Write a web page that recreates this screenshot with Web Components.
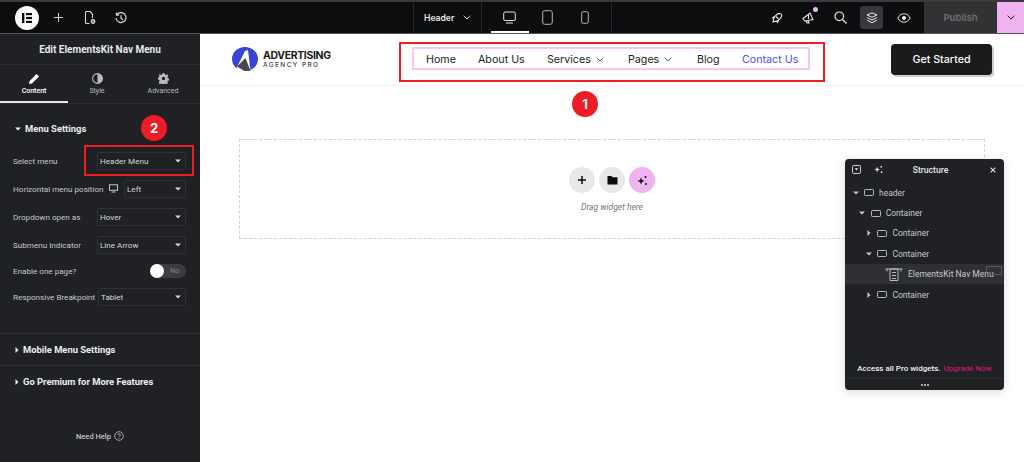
<!DOCTYPE html>
<html>
<head>
<meta charset="utf-8">
<title>Header editor</title>
<style>
  html, body { margin: 0; height: 100%; overflow: hidden; background: #fff; }
  body { font-family: Roboto, "Liberation Sans", sans-serif; }
</style>
</head>
<body>
<editor-app></editor-app>
<script>
const CARET_DOWN = '<svg width="6" height="4" viewBox="0 0 6 4"><path d="M0 .4h6L3 3.600z" fill="currentColor"/></svg>';
const CARET_RIGHT = '<svg width="4" height="6" viewBox="0 0 4 6"><path d="M.5 0v6l3-3z" fill="currentColor"/></svg>';
const CHEVRON = '<svg width="8" height="5" viewBox="0 0 8 5"><path d="M.6.700L4 4 7.400.700" fill="none" stroke="currentColor" stroke-width=".9"/></svg>';
const CONTAINER = '<svg width="10" height="7" viewBox="0 0 10 7"><rect x=".5" y=".5" width="9" height="6" rx=".8" fill="none" stroke="currentColor" stroke-width=".9"/></svg>';

class TopBar extends HTMLElement {
  constructor() {
    super();
    this.attachShadow({ mode: 'open' }).innerHTML = `
<style>
  :host { display: flex; height: 34px; box-sizing: border-box; background: #0c0d0e; border-top: 2px solid #3a3b3d; border-bottom: 1px solid #55575a; color: #e6e8ea; font-family: Inter, sans-serif; }
  .ic { display: flex; align-items: center; justify-content: center; }
  .left { display: flex; align-items: center; width: 413px; flex: none; }
  .logo { width: 24px; height: 24px; border-radius: 50%; background: #fff; margin-left: 15px; display: flex; align-items: center; justify-content: center; }
  .left .ic { width: 31px; }
  .left .ic.first { margin-left: 4px; }
  .doc { display: flex; align-items: center; width: 69px; flex: none; box-sizing: border-box; border-left: 1px solid #26282b; border-right: 1px solid #26282b; padding-left: 10px; gap: 9px; font-size: 8.600px; font-weight: 600; }
  .devices { display: flex; width: 120px; padding-left: 9px; flex: none; border-right: 1px solid #26282b; }
  .devices .ic { width: 37.5px; position: relative; }
  .devices .on::after { content: ""; position: absolute; left: 0; right: 0; bottom: 0; height: 2px; background: #fff; }
  .right { display: flex; align-items: center; flex: 1; justify-content: flex-end; }
  .tools { display: flex; align-items: center; gap: 8.750px; margin-right: 9px; }
  .tools .ic { width: 23px; height: 23px; border-radius: 3px; position: relative; }
  .tools .on { background: #36383b; }
  .dot { position: absolute; width: 5px; height: 5px; border-radius: 50%; background: #efb3f2; top: 1px; right: 2px; }
  .publish { width: 73px; align-self: stretch; background: #313234; color: #6f7072; font-size: 9.600px; font-weight: 600; display: flex; align-items: center; justify-content: center; }
  .more { width: 27px; align-self: stretch; background: #efb3f2; color: #0c0d0e; display: flex; align-items: center; justify-content: center; }
</style>
<div class="left">
  <div class="logo"><svg width="12" height="12" viewBox="0 0 12 12" fill="#0c0d0e"><rect x="1" y="1" width="2.400" height="10"/><rect x="5" y="1" width="6" height="2.200"/><rect x="5" y="4.900" width="6" height="2.200"/><rect x="5" y="8.800" width="6" height="2.200"/></svg></div>
  <div class="ic first"><svg width="9" height="9" viewBox="0 0 9 9"><path d="M4.500 0v9M0 4.500h9" stroke="#c9cbce"/></svg></div>
  <div class="ic"><svg width="12" height="14" viewBox="0 0 12 14" fill="none" stroke="#d5d7da" stroke-width="1.100"><path d="M5.500 12.500h-3a1 1 0 0 1-1-1v-10a1 1 0 0 1 1-1H6l2.500 2.500v4"/><circle cx="9" cy="10.500" r="1.900" fill="#777"/></svg></div>
  <div class="ic"><svg width="12" height="12" viewBox="0 0 12 12" fill="none" stroke="#d5d7da" stroke-width="1.200"><path d="M1.800 2.800A5 5 0 1 1 1 6M1.500 .6v2.600h2.600M6 3.300v3l2 1.200"/></svg></div>
</div>
<div class="doc"><span>Header</span>${CHEVRON}</div>
<div class="devices">
  <div class="ic on"><svg width="13" height="13" viewBox="0 0 13 13" fill="none" stroke="currentColor"><rect x=".7" y="1" width="11.600" height="8.500" rx="1.500"/><path d="M3 12h7"/></svg></div>
  <div class="ic"><svg width="11" height="15" viewBox="0 0 11 15" fill="none" stroke="#b4b6b9"><rect x=".7" y=".7" width="9.600" height="13.600" rx="2"/></svg></div>
  <div class="ic"><svg width="8" height="13" viewBox="0 0 8 13" fill="none" stroke="#b4b6b9"><rect x=".7" y=".7" width="6.600" height="11.600" rx="1.500"/></svg></div>
</div>
<div class="right">
  <div class="tools">
    <div class="ic"><svg width="12" height="12" viewBox="0 0 12 12" fill="none" stroke="currentColor" stroke-width="1.100"><ellipse cx="6.500" cy="5.500" rx="5" ry="2.700" transform="rotate(-45 6.500 5.500)"/><path d="M5 4.500l2.500 2.500M3.800 4.400L1.500 5.500l1.500 1M7.600 8.200L6.500 10.500l-1-1.500M3 9l-1.500 1.500"/></svg></div>
    <div class="ic"><svg width="13" height="13" viewBox="0 0 13 13" fill="none" stroke="currentColor" stroke-width="1.100"><path d="M1 7.500L8 2l3 6.500-8 1.500zM4 10l1 2h2l-1-2.500M6.500 4v4"/></svg><span class="dot"></span></div>
    <div class="ic"><svg width="13" height="13" viewBox="0 0 13 13" fill="none" stroke="currentColor" stroke-width="1.200"><circle cx="5.300" cy="5.300" r="4.300"/><path d="M8.500 8.500l4 4"/></svg></div>
    <div class="ic on"><svg width="12" height="12" viewBox="0 0 12 12" fill="none" stroke="currentColor"><path d="M6 .8L11 3 6 5.300 1 3zM1.200 5.800L6 8l4.800-2.200M1.200 8.300L6 10.800l4.800-2.500"/></svg></div>
    <div class="ic"><svg width="14" height="10" viewBox="0 0 14 10" fill="none" stroke="currentColor"><path d="M.8 5C2.500 2 4.500.8 7 .8S11.500 2 13.200 5C11.500 8 9.500 9.200 7 9.200S2.500 8 .8 5z"/><circle cx="7" cy="5" r="1.600" fill="currentColor"/></svg></div>
  </div>
  <div class="publish">Publish</div>
  <div class="more">${CHEVRON}</div>
</div>`;
  }
}

class SelectRow extends HTMLElement {
  constructor() {
    super();
    const width = this.getAttribute('width') || 89;
    this.attachShadow({ mode: 'open' }).innerHTML = `
<style>
  :host { display: flex; align-items: center; height: 28px; font-size: 8.100px; color: #c6c8cb; }
  .label { flex: 1; display: flex; align-items: center; white-space: nowrap; }
  slot[name=icon] { display: block; }
  .box { width: ${width}px; height: 18px; box-sizing: border-box; flex: none; border: 1px solid #2f3135; border-radius: 2px; display: flex; align-items: center; justify-content: space-between; padding: 0 4px 0 2px; color: #d5d7da; }
</style>
<div class="label"><slot></slot></div><slot name="icon"></slot>
<div class="box"><span>${this.getAttribute('value')}</span>${CARET_DOWN}</div>`;
  }
}

class EditorSidebar extends HTMLElement {
  constructor() {
    super();
    this.attachShadow({ mode: 'open' }).innerHTML = `
<style>
  :host { display: flex; flex-direction: column; width: 200px; flex: none; background: #1f2124; color: #e6e8ea; font-family: Roboto, sans-serif; position: relative; }
  .title { height: 31px; display: flex; align-items: center; justify-content: center; font-size: 10px; font-weight: 700; border-bottom: 1px solid #2b2d30; box-sizing: border-box; }
  .tabs { display: flex; height: 38px; border-bottom: 1px solid #2b2d30; }
  .tab { display: flex; flex-direction: column; align-items: center; justify-content: center; gap: 3px; font-size: 7px; color: #b9bbbe; }
  .tab.on { color: #fff; font-weight: 500; box-shadow: inset 0 -2px #e6e8ea; width: 68px; }
  .tab.s { width: 58px; }
  .tab.a { width: 74px; }
  .section { padding: 19px 14px 0 13px; height: 230px; box-sizing: border-box; border-bottom: 1px solid #303235; }
  .head { display: flex; align-items: center; gap: 4px; font-size: 9.400px; font-weight: 700; color: #eceef0; }
  .head.top { margin-bottom: 13px; }
  .fold { height: 32px; box-sizing: border-box; padding-left: 15px; gap: 4px; border-bottom: 1px solid #303235; }
  .fold.last { border: none; height: 31px; }
  .rows { display: flex; flex-direction: column; }
  .toggle-row { display: flex; align-items: center; justify-content: space-between; height: 24px; font-size: 8.100px; color: #c6c8cb; }
  .toggle { width: 36px; height: 14px; border-radius: 7px; background: #3a3c3f; position: relative; color: #85878a; font-size: 7px; display: flex; align-items: center; justify-content: flex-end; padding-right: 7px; box-sizing: border-box; }
  .toggle::before { content: ""; position: absolute; left: 0; top: 0; width: 14px; height: 14px; border-radius: 50%; background: #fff; }
  .help { margin-top: auto; margin-bottom: 21px; display: flex; justify-content: center; align-items: center; gap: 3px; font-size: 7.500px; font-weight: 500; color: #c6c8cb; }
  .tab-handle { position: absolute; left: 100%; top: 199px; width: 10px; height: 33px; background: #1f2124; display: flex; align-items: center; justify-content: center; color: #e6e8ea; }
  .mark { position: absolute; left: 84px; top: 111px; width: 110px; height: 31px; box-sizing: border-box; border: 2px solid #ee1c25; }
  .badge { position: absolute; left: 141px; top: 81px; width: 26px; height: 26px; border-radius: 50%; background: #ee1c25; color: #fff; font: 700 13px Inter, sans-serif; display: flex; align-items: center; justify-content: center; }
</style>
<div class="title">Edit ElementsKit Nav Menu</div>
<div class="tabs">
  <div class="tab on"><svg width="11" height="11" viewBox="0 0 11 11" fill="currentColor"><path d="M0 11l.6-3L7.500 1l2.500 2.500L3 10.500z"/></svg>Content</div>
  <div class="tab s"><svg width="11" height="11" viewBox="0 0 11 11"><circle cx="5.500" cy="5.500" r="4.900" fill="none" stroke="currentColor" stroke-width="1.100"/><path d="M5.500 .6a4.900 4.900 0 0 0 0 9.800z" fill="currentColor" transform="matrix(-1 0 0 1 11 0)"/></svg>Style</div>
  <div class="tab a"><svg width="11" height="11" viewBox="0 0 11 11" fill="currentColor"><path fill-rule="evenodd" d="M4.500 0h2l.3 1.500 1 .5L9.200 1.300l1.200 1.500-1 1.200.3 1 1.300.500v2l-1.400.4-.4 1 .8 1.200-1.500 1.300-1.200-.8-1 .4-.3 1.400h-2l-.3-1.400-1-.4-1.200.8L.9 9.100l.8-1.200-.4-1L0 6.500v-2l1.300-.5.3-1-1-1.200L1.800 1.300 3.200 2l1-.5zM5.500 3.800a1.700 1.700 0 1 0 0 3.400 1.700 1.700 0 0 0 0-3.400z"/></svg>Advanced</div>
</div>
<div class="section">
  <div class="head top"><span style="width:6px;display:flex;margin-left:2px">${CARET_DOWN}</span><span>Menu Settings</span></div>
  <div class="rows">
    <select-row value="Header Menu">Select menu</select-row>
    <select-row value="Left" width="62">Horizontal menu position<svg slot="icon" width="9" height="9" viewBox="0 0 9 9" fill="none" stroke="#c6c8cb" style="margin-right:6px"><rect x=".5" y=".8" width="8" height="5.500"/><path d="M2.500 8h4"/></svg></select-row>
    <select-row value="Hover">Dropdown open as</select-row>
    <select-row value="Line Arrow">Submenu Indicator</select-row>
    <div class="toggle-row"><span>Enable one page?</span><div class="toggle">No</div></div>
    <select-row value="Tablet" width="88">Responsive Breakpoint</select-row>
  </div>
</div>
<div class="head fold">${CARET_RIGHT}<span>Mobile Menu Settings</span></div>
<div class="head fold last">${CARET_RIGHT}<span>Go Premium for More Features</span></div>
<div class="help"><span>Need Help</span><svg width="10" height="10" viewBox="0 0 10 10" fill="none" stroke="currentColor" stroke-width=".8"><circle cx="5" cy="5" r="4.300"/><path d="M3.700 4a1.300 1.300 0 1 1 1.900 1.200c-.4.200-.6.400-.6.900M5 7v.8"/></svg></div>
<div class="tab-handle"><svg width="5" height="7" viewBox="0 0 5 7"><path d="M4 .8L1 3.500 4 6.200" fill="none" stroke="currentColor" stroke-width="1.200"/></svg></div>
<div class="mark"></div>
<div class="badge">2</div>`;
  }
}

class NavMenu extends HTMLElement {
  constructor() {
    super();
    this.attachShadow({ mode: 'open' }).innerHTML = `
<style>
  :host { display: flex; align-items: center; width: 398px; height: 23px; box-sizing: border-box; border: 2px solid #f6c6fa; padding: 1px 0 0 12px; font: 400 10.700px Inter, sans-serif; color: #1c1c1c; position: relative; }
  span { white-space: nowrap; display: flex; align-items: center; gap: 5px; }
  span svg { color: #444; }
  .a { width: 52px; } .b { width: 69px; } .c { width: 81px; } .d { width: 69px; } .e { width: 45px; }
  .f { color: #4a4df0; }
  .mark { position: absolute; left: -15px; top: -7px; width: 426px; height: 40px; box-sizing: border-box; border: 2px solid #ee1c25; pointer-events: none; }
  .badge { position: absolute; left: 158px; top: 42px; width: 26px; height: 26px; border-radius: 50%; background: #ee1c25; color: #fff; font: 700 13px Inter, sans-serif; display: flex; align-items: center; justify-content: center; }
</style>
<span class="a">Home</span><span class="b">About Us</span><span class="c">Services ${CHEVRON}</span><span class="d">Pages ${CHEVRON}</span><span class="e">Blog</span><span class="f">Contact Us</span>
<div class="mark"></div>
<div class="badge">1</div>`;
  }
}

class SiteHeader extends HTMLElement {
  constructor() {
    super();
    this.attachShadow({ mode: 'open' }).innerHTML = `
<style>
  :host { display: flex; align-items: center; height: 52px; box-sizing: border-box; border-bottom: 1px solid #f0f0f0; padding: 0 32px 2px 32px; justify-content: space-between; }
  .logo { display: flex; align-items: center; gap: 5px; width: 99px; }
  .logo svg { flex: none; }
  .words { display: flex; flex-direction: column; font-family: Inter, sans-serif; color: #1a1a1a; padding-top: 2px; }
  .w1 { font-size: 10.400px; font-weight: 700; line-height: 10px; white-space: nowrap; letter-spacing: -.3px; }
  .w2 { font-size: 6.500px; font-weight: 500; line-height: 8px; letter-spacing: 1.400px; color: #444; white-space: nowrap; }
  .cta { width: 101px; height: 31px; box-sizing: border-box; border-radius: 4px; background: #1b1b1b; color: #fff; font: 500 10.700px Inter, sans-serif; display: flex; align-items: center; justify-content: center; box-shadow: 2px 2px 0 #cfcfcf; margin-top: 1px; }
</style>
<div class="logo">
  <svg width="26" height="24" viewBox="0 0 26 24"><ellipse cx="13" cy="12" rx="13" ry="12" fill="#3a43d8"/><path d="M3 24h23V17l-3 4-1 3-3.500 0L16 3l-3 1L6 18z" fill="#fff"/><path d="M5 19.500L13.500 11l5 13h-6z" fill="#47484c"/></svg>
  <div class="words"><span class="w1">ADVERTISING</span><span class="w2">AGENCY PRO</span></div>
</div>
<nav-menu></nav-menu>
<div class="cta">Get Started</div>`;
  }
}

class DropZone extends HTMLElement {
  constructor() {
    super();
    this.attachShadow({ mode: 'open' }).innerHTML = `
<style>
  :host { display: flex; flex-direction: column; align-items: center; justify-content: center; width: 746px; height: 100px; box-sizing: border-box; border: 1px dashed #cfd1d4; margin: 53px 0 0 39px; gap: 9px; padding-top: 1px; }
  .btns { display: flex; gap: 4px; }
  .btn { width: 26px; height: 26px; border-radius: 50%; background: #e6e8ea; display: flex; align-items: center; justify-content: center; color: #0c0d0e; }
  .btn.ai { background: #efb3f2; }
  .hint { font: italic 400 8.500px Roboto, sans-serif; color: #6d7882; }
</style>
<div class="btns">
  <div class="btn"><svg width="10" height="10" viewBox="0 0 10 10"><path d="M5 1v8M1 5h8" stroke="currentColor" stroke-width="1.500"/></svg></div>
  <div class="btn"><svg width="11" height="10" viewBox="0 0 11 10" fill="currentColor"><path d="M.5 1h4l1 1.300h5V9a.6.600 0 0 1-.6.600H1A.6.600 0 0 1 .5 9z"/></svg></div>
  <div class="btn ai"><svg width="11" height="11" viewBox="0 0 11 11" fill="currentColor"><path d="M4 2.500l1 2.500 2.500 1L5 7 4 9.500 3 7 .5 6 3 5z"/><circle cx="8.500" cy="2" r="1"/><circle cx="9" cy="9" r="1"/></svg></div>
</div>
<div class="hint">Drag widget here</div>`;
  }
}

class TreeRow extends HTMLElement {
  constructor() {
    super();
    const level = Number(this.getAttribute('level') || 0);
    const caret = this.getAttribute('caret') === 'right' ? CARET_RIGHT : CARET_DOWN;
    this.attachShadow({ mode: 'open' }).innerHTML = `
<style>
  :host { display: flex; align-items: center; height: 20.400px; padding-left: ${7 + level * 6.7}px; gap: 5px; font-size: 8.500px; color: #c6c8cb; }
  .c { width: 7px; display: flex; justify-content: center; }
  .i { display: flex; }
</style>
<span class="c">${caret}</span><span class="i">${CONTAINER}</span><span><slot></slot></span>`;
  }
}

class StructurePanel extends HTMLElement {
  constructor() {
    super();
    this.attachShadow({ mode: 'open' }).innerHTML = `
<style>
  :host { position: absolute; left: 645px; top: 125px; width: 159px; height: 231px; display: flex; flex-direction: column; background: #1f2124; border-radius: 4px; box-shadow: 0 2px 10px rgba(0,0,0,.15); color: #e6e8ea; font-family: Roboto, sans-serif; overflow: hidden; }
  .bar { display: flex; align-items: center; height: 23.500px; box-sizing: border-box; padding: 0 8px 2px 7px; flex: none; font-size: 8.600px; font-weight: 500; }
  .bar b { flex: 1; font-weight: 500; text-align: center; padding-right: 12px; }
  .bar .g { display: flex; gap: 13px; align-items: center; }
  .tree { flex: 1; }
  .sel { display: flex; align-items: center; height: 20.400px; background: #2e3033; padding-left: 40px; gap: 5px; font-size: 8.500px; color: #c6c8cb; position: relative; white-space: nowrap; }
  .ghost { position: absolute; left: 141px; top: 2px; width: 16px; height: 9px; border: 1px solid #5a5c60; border-radius: 1px; box-sizing: border-box; }
  .access { height: 20px; flex: none; display: flex; align-items: center; justify-content: center; gap: 3px; font-size: 8px; font-weight: 500; color: #f1f2f3; border-bottom: 1px solid #2b2d30; }
  .access a { color: #c2186e; }
  .dots { height: 11px; flex: none; display: flex; align-items: center; justify-content: center; }
</style>
<div class="bar">
  <div class="g">
    <svg width="9" height="9" viewBox="0 0 10 10" fill="none" stroke="currentColor"><rect x=".6" y=".6" width="8.800" height="8.800" rx="1"/><path d="M3 3.500h4L5 6z" fill="currentColor" stroke="none"/></svg>
    <svg width="9" height="9" viewBox="0 0 10 10" fill="currentColor"><path d="M3.500 2l.9 2.100L6.500 5l-2.100.9L3.500 8l-.9-2.100L.5 5l2.100-.9z"/><circle cx="8" cy="2" r="1"/><circle cx="8.500" cy="8" r="1"/></svg>
  </div>
  <b>Structure</b>
  <svg width="6" height="6" viewBox="0 0 7 7"><path d="M.7.700l5.600 5.600M6.300.700L.7 6.300" stroke="currentColor" stroke-width="1.200"/></svg>
</div>
<div class="tree">
  <tree-row>header</tree-row>
  <tree-row level="1">Container</tree-row>
  <tree-row level="2" caret="right">Container</tree-row>
  <tree-row level="2">Container</tree-row>
  <div class="sel"><svg width="18" height="13" viewBox="0 0 18 13" fill="none" stroke="currentColor" stroke-width=".9"><path d="M.5 1h17M2 1v2.500M16 1v2.500M5 1h8v11.500H5zM7 4.500h4M7 7.500h4M7 10.500h4"/></svg><span>ElementsKit Nav Menu</span><span class="ghost"></span></div>
  <tree-row level="2" caret="right">Container</tree-row>
</div>
<div class="access"><span>Access all Pro widgets.</span> <a>Upgrade Now</a></div>
<div class="dots"><svg width="8" height="2" viewBox="0 0 8 2" fill="#d5d7da"><circle cx="1" cy="1" r="1"/><circle cx="4" cy="1" r="1"/><circle cx="7" cy="1" r="1"/></svg></div>`;
  }
}

class EditorApp extends HTMLElement {
  constructor() {
    super();
    this.attachShadow({ mode: 'open' }).innerHTML = `
<style>
  :host { display: flex; flex-direction: column; width: 1024px; height: 462px; overflow: hidden; }
  .main { display: flex; flex: 1; min-height: 0; }
  .canvas { flex: 1; position: relative; background: #fff; }
</style>
<top-bar></top-bar>
<div class="main">
  <editor-sidebar></editor-sidebar>
  <div class="canvas">
    <site-header></site-header>
    <drop-zone></drop-zone>
    <structure-panel></structure-panel>
  </div>
</div>`;
  }
}

customElements.define('top-bar', TopBar);
customElements.define('select-row', SelectRow);
customElements.define('editor-sidebar', EditorSidebar);
customElements.define('nav-menu', NavMenu);
customElements.define('site-header', SiteHeader);
customElements.define('drop-zone', DropZone);
customElements.define('tree-row', TreeRow);
customElements.define('structure-panel', StructurePanel);
customElements.define('editor-app', EditorApp);
</script>
</body>
</html>
